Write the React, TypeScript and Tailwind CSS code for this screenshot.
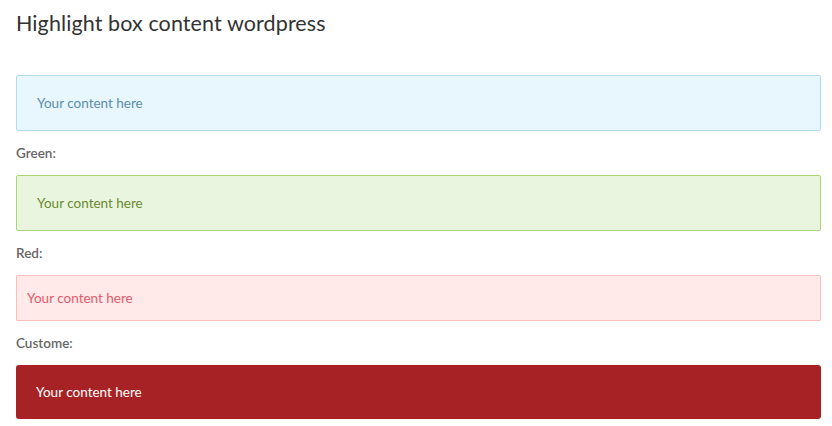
const BOX_FONT = { fontFamily: 'Lato, "Open Sans", sans-serif' };

function Label({ children }: { children: string }) {
  return (
    <p className="text-[13.5px] font-semibold text-[#666] leading-5 mt-[12px] mb-[12px]" style={BOX_FONT}>
      {children}
    </p>
  );
}

export default function App() {
  return (
    <div className="w-[832px] h-[426px] bg-white px-4 pt-[9px]" style={BOX_FONT}>
      <h1 className="text-[21.5px] leading-7 text-[#333] font-normal tracking-[0.1px]" style={{ fontFamily: 'Lato, "Open Sans", sans-serif' }}>
        Highlight box content wordpress
      </h1>

      <div className="w-[805px] mt-[38px]">
        {/* Blue */}
        <div className="h-[56px] flex items-center px-5 border border-[#b1dbec] bg-[#e8f6fd] rounded-[2px] text-[13.5px] text-[#5b8ea9]">
          Your content here
        </div>

        <Label>Green:</Label>
        <div className="h-[56px] flex items-center px-5 border border-[#a8d876] bg-[#e9f5df] rounded-[2px] text-[13.5px] text-[#6b8a2e]">
          Your content here
        </div>

        <Label>Red:</Label>
        <div className="h-[46px] flex items-center px-[10px] border border-[#f8bfbf] bg-[#ffe9e9] rounded-[1px] text-[13.5px] text-[#e35b6c]">
          Your content here
        </div>

        <Label>Custome:</Label>
        <div className="h-[54px] flex items-center px-5 bg-[#a72224] rounded-[3px] text-[13.5px] text-white">
          Your content here
        </div>
      </div>
    </div>
  );
}
